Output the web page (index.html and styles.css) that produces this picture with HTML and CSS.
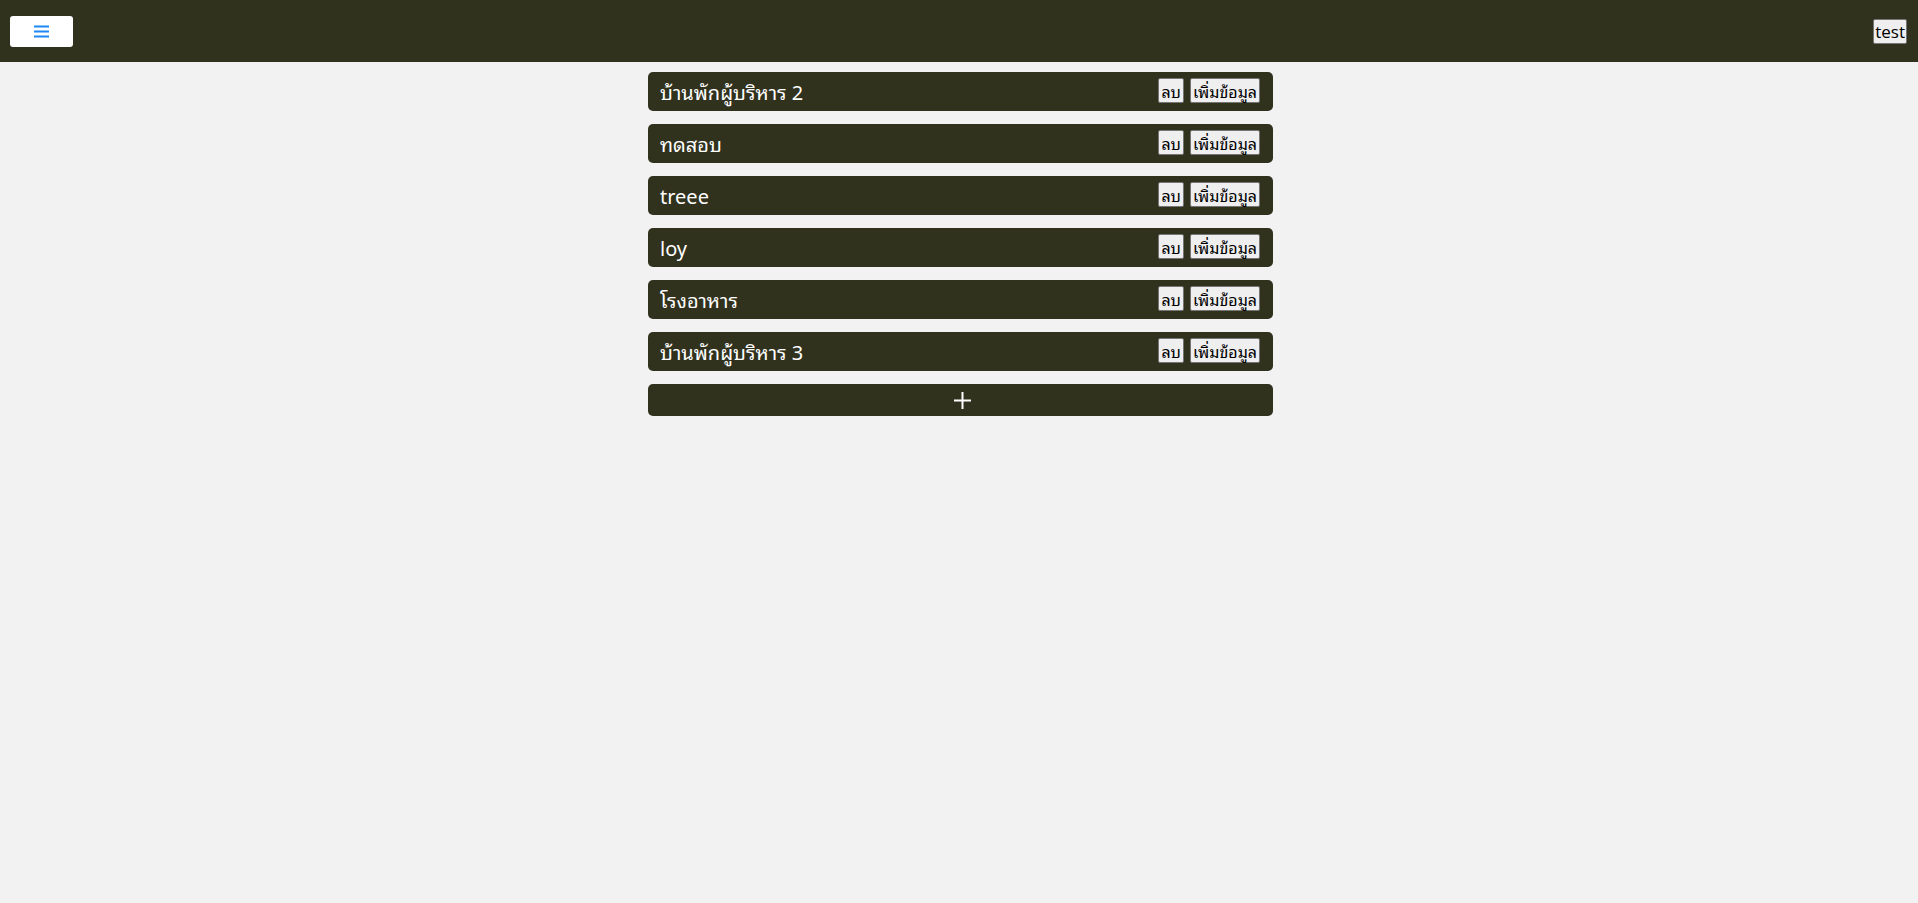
FILE: index.html
```html
<!DOCTYPE html>
<html lang="th">
<head>
<meta charset="utf-8">
<title>Buildings</title>
<link rel="stylesheet" href="styles.css">
</head>
<body>
<header class="topbar">
  <button class="menu-btn" aria-label="menu">
    <svg width="16" height="13" viewBox="0 0 16 13"><rect x="0" y="0.5" width="15" height="2" fill="#1e88f5"/><rect x="0" y="5.5" width="15" height="2" fill="#1e88f5"/><rect x="0" y="10.5" width="15" height="2" fill="#1e88f5"/></svg>
  </button>
  <button class="user-btn">test</button>
</header>
<main class="list">
  <div class="row"><span class="name">บ้านพักผู้บริหาร 2</span><span class="actions"><button class="sm">ลบ</button><button class="sm">เพิ่มข้อมูล</button></span></div>
  <div class="row"><span class="name">ทดสอบ</span><span class="actions"><button class="sm">ลบ</button><button class="sm">เพิ่มข้อมูล</button></span></div>
  <div class="row"><span class="name">treee</span><span class="actions"><button class="sm">ลบ</button><button class="sm">เพิ่มข้อมูล</button></span></div>
  <div class="row"><span class="name">loy</span><span class="actions"><button class="sm">ลบ</button><button class="sm">เพิ่มข้อมูล</button></span></div>
  <div class="row"><span class="name">โรงอาหาร</span><span class="actions"><button class="sm">ลบ</button><button class="sm">เพิ่มข้อมูล</button></span></div>
  <div class="row"><span class="name">บ้านพักผู้บริหาร 3</span><span class="actions"><button class="sm">ลบ</button><button class="sm">เพิ่มข้อมูล</button></span></div>
  <div class="add-row"><svg class="plus" width="17" height="17" viewBox="0 0 17 17"><rect x="7.5" y="0" width="2" height="17" fill="#fff"/><rect x="0" y="7.5" width="17" height="2" fill="#fff"/></svg></div>
</main>
</body>
</html>
```
FILE: styles.css
```css
html, body {
  margin: 0;
  padding: 0;
  background: #f2f2f2;
  font-family: "Noto Sans Thai Looped", "Noto Sans Thai", "Noto Sans", "Open Sans", sans-serif;
}
body {
  padding-left: 3px;
}
.topbar {
  height: 62px;
  background: #31321e;
  display: flex;
  align-items: center;
  justify-content: space-between;
  padding: 0 11px 0 10px;
  margin-left: -3px;
  box-sizing: border-box;
}
.menu-btn {
  width: 63px;
  height: 31px;
  background: #fff;
  border: none;
  border-radius: 3px;
  display: flex;
  align-items: center;
  justify-content: center;
  padding: 0;
}
.user-btn {
  height: 25px;
  padding: 0 1px;
  font-family: "Open Sans", "Noto Sans", sans-serif;
  font-size: 17px;
  line-height: 1;
  color: #000;
  background: #efefef;
  border: 1px solid #767676;
  border-radius: 2px;
}
.list {
  width: 625px;
  margin: 10px auto 0;
  display: flex;
  flex-direction: column;
  gap: 13px;
}
.row {
  height: 39px;
  background: #31321e;
  border-radius: 5px;
  display: flex;
  align-items: center;
  justify-content: space-between;
  padding: 0 13px 0 12px;
  box-sizing: border-box;
}
.name {
  color: #fff;
  font-size: 20px;
  font-weight: 400;
  line-height: 1;
  padding-bottom: 2px;
}
.actions {
  display: flex;
  gap: 6px;
  margin-top: -2px;
}
.sm {
  height: 25px;
  padding: 0 2px;
  font-family: "Noto Sans Thai Looped", "Noto Sans Thai", "Noto Sans", sans-serif;
  font-size: 16px;
  font-weight: 400;
  line-height: 1;
  color: #000;
  background: #efefef;
  border: 1px solid #767676;
  border-radius: 2px;
}
.add-row {
  height: 32px;
  background: #31321e;
  border-radius: 5px;
  display: flex;
  align-items: center;
  justify-content: center;
}
.plus {
  display: block;
  margin-left: 4px;
}
```
